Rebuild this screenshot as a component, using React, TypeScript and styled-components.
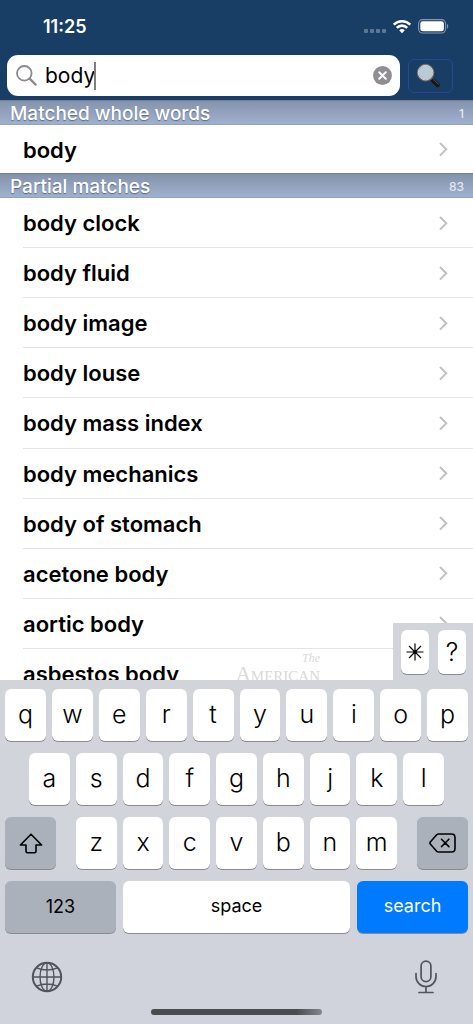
import React, { useState } from 'react';
import styled, { createGlobalStyle } from 'styled-components';

const GlobalStyle = createGlobalStyle`
  * { box-sizing: border-box; }
  body {
    margin: 0;
    background: #fff;
    font-family: Inter, "Liberation Sans", sans-serif;
    color: #000;
  }
  button, input { font: inherit; color: inherit; }
  button { padding: 0; border: 0; cursor: pointer; }
`;

const Screen = styled.div`
  display: flex;
  flex-direction: column;
  height: 100vh;
  overflow: hidden;
`;

const Header = styled.header`
  background: #183e66;
`;

const StatusBar = styled.div`
  display: flex;
  align-items: center;
  justify-content: space-between;
  height: 55px;
  padding: 0 24px 2px 43px;
  color: #fff;
`;

const Time = styled.time`
  font-size: 18px;
  line-height: 22px;
  font-weight: 600;
`;

const StatusIcons = styled.div`
  display: flex;
  align-items: center;
  gap: 6px;
`;

const SearchBar = styled.form`
  display: flex;
  align-items: center;
  gap: 8px;
  padding: 0 20px 4px 7px;
`;

const SearchField = styled.label`
  display: flex;
  align-items: center;
  flex: 1;
  height: 41px;
  padding: 0 8px 0 9px;
  border-radius: 11px;
  background: #fff;
  cursor: text;
`;

const SearchInput = styled.input`
  field-sizing: content;
  min-width: 1px;
  margin-left: 8px;
  padding: 0;
  border: 0;
  outline: 0;
  background: none;
  font-size: 21px;
  line-height: 28px;
  caret-color: transparent;
`;

const Caret = styled.span`
  width: 2px;
  height: 28px;
  margin-left: -1px;
  background: #808080;
`;

const ClearButton = styled.button`
  display: flex;
  margin-left: auto;
  background: none;
`;

const GoButton = styled.button`
  display: flex;
  align-items: center;
  width: 45px;
  height: 34px;
  padding-left: 7px;
  border: 1px solid #2e4496;
  border-radius: 6px;
  background: none;
`;

const Results = styled.main`
  position: relative;
  display: flex;
  flex: 1;
  flex-direction: column;
  min-height: 0;
  overflow: hidden;
`;

const SectionHeader = styled.h2`
  display: flex;
  flex: none;
  align-items: center;
  justify-content: space-between;
  height: 25px;
  margin: 0;
  padding: 3px 9px 0 10px;
  border-top: 1px solid #6f7f99;
  border-bottom: 1px solid #92a3c0;
  background: linear-gradient(#8593ac, #9fb0ce);
  color: #fff;
  font-size: 19px;
  line-height: 24px;
  font-weight: 500;
  text-shadow: 0 1px 1px #5c6a80;
`;

const Count = styled.span`
  color: #e3e8f2;
  font-size: 12px;
  font-weight: 500;
  text-shadow: none;
`;

const WholeList = styled.ul`
  flex: none;
  margin: 0;
  padding: 0;
  list-style: none;
`;

const PartialList = styled.ul`
  display: grid;
  flex: 1;
  grid-template-rows: repeat(9, 1fr) 31px;
  min-height: 0;
  margin: 0;
  padding: 0;
  list-style: none;
`;

const Row = styled.li`
  position: relative;
  display: flex;
  min-height: 0;
  padding-left: 23px;
`;

const RowLink = styled.a<{ $line: boolean }>`
  display: flex;
  flex: 1;
  align-items: center;
  justify-content: space-between;
  min-height: ${(p) => (p.$line ? 50 : 48)}px;
  padding: 1px 25px 0 0;
  border-bottom: ${(p) => (p.$line ? '1px solid #e4e4e6' : '0')};
  color: #000;
  font-size: 22px;
  line-height: 28px;
  font-weight: 600;
  text-decoration: none;
`;

const Watermark = styled.div`
  position: absolute;
  top: 2px;
  right: 153px;
  color: #d9d9d9;
  font-family: "Liberation Serif", serif;
  text-align: right;
`;

const WatermarkThe = styled.div`
  font-size: 12px;
  line-height: 14px;
  font-style: italic;
`;

const WatermarkName = styled.div`
  font-size: 21px;
  line-height: 18px;
  font-variant: small-caps;
`;

const Wildcards = styled.div`
  position: absolute;
  right: 0;
  bottom: 0;
  display: flex;
  gap: 9px;
  padding: 7px 7px 6px 8px;
  background: #d1d4da;
`;

const Keyboard = styled.section`
  flex: none;
  background: linear-gradient(#d1d4d9, #d0d3dc);
`;

const Keys = styled.div`
  display: flex;
  flex-direction: column;
  gap: 12px;
  padding: 9px 5px 0;
`;

const KeyRow = styled.div<{ $inset?: number; $gap?: number }>`
  display: flex;
  gap: ${(p) => p.$gap ?? 6}px;
  padding: 0 ${(p) => p.$inset ?? 0}px;
`;

const LetterGroup = styled.div`
  display: flex;
  flex: 1;
  gap: 6px;
`;

const tones = {
  light: ['#fff', '#000'],
  dark: ['#abb1bb', '#000'],
  blue: ['#007aff', '#fff'],
};

const Key = styled.button<{ $tone?: keyof typeof tones; $width?: number; $word?: boolean; $short?: boolean }>`
  display: flex;
  flex: ${(p) => (p.$width ? `0 0 ${p.$width}px` : '1 1 0')};
  align-items: center;
  justify-content: center;
  min-width: 0;
  height: ${(p) => (p.$short ? 44 : 52)}px;
  padding-bottom: ${(p) => (p.$short || p.$tone === 'dark' ? 0 : 3)}px;
  border-radius: 6px;
  background: ${(p) => tones[p.$tone ?? 'light'][0]};
  box-shadow: 0 1px 0 #898b8f;
  color: ${(p) => tones[p.$tone ?? 'light'][1]};
  font-size: ${(p) => (p.$word ? 18 : 25)}px;
  line-height: 32px;
  font-weight: ${(p) => (p.$word ? 400 : 350)};
`;

const BottomBar = styled.div`
  display: flex;
  align-items: center;
  justify-content: space-between;
  height: 76px;
  padding: 12px 35px 0 31px;
`;

const IconButton = styled.button`
  display: flex;
  background: none;
`;

const HomeIndicator = styled.div`
  width: 36%;
  height: 6px;
  margin: 0 auto 9px;
  border-radius: 3px;
  background: linear-gradient(90deg, #4b4c4e 85%, #85878c);
`;

const Signal = () => (
  <svg width="22" height="12" viewBox="0 0 22 12" fill="#5d7894">
    {[0, 6, 12, 18].map((x) => (
      <rect key={x} x={x} y="8" width="4" height="4" rx="1" />
    ))}
  </svg>
);

const Wifi = () => (
  <svg width="20" height="15" viewBox="0 0 20 15" fill="none" stroke="#fff" strokeWidth="2.6">
    <path d="M1.7 5.6a11.8 11.8 0 0 1 16.6 0" />
    <path d="M4.8 8.8a7.4 7.4 0 0 1 10.4 0" />
    <path d="M10 14.2 7.2 11.3a4 4 0 0 1 5.6 0z" fill="#fff" stroke="none" />
  </svg>
);

const Battery = () => (
  <svg width="31" height="15" viewBox="0 0 31 15">
    <rect x="0.6" y="0.6" width="27" height="13.4" rx="4" fill="none" stroke="#8197ae" strokeWidth="1.1" />
    <rect x="2.3" y="2.3" width="23.6" height="10" rx="2.4" fill="#fff" />
    <path d="M29 5c1.6.5 1.6 4.3 0 4.8z" fill="#8197ae" />
  </svg>
);

const SearchIcon = () => (
  <svg width="21" height="21" viewBox="0 0 21 21" fill="none" stroke="#8a8a8e" strokeWidth="1.8">
    <circle cx="8.3" cy="8.3" r="7.3" />
    <path d="m13.6 13.6 6 6" strokeWidth="2.3" strokeLinecap="round" />
  </svg>
);

const ClearIcon = () => (
  <svg width="19" height="19" viewBox="0 0 19 19">
    <circle cx="9.5" cy="9.5" r="9.4" fill="#8e8e93" />
    <path d="m6.2 6.2 6.6 6.6m0-6.6-6.6 6.6" stroke="#fff" strokeWidth="2" strokeLinecap="round" />
  </svg>
);

const Magnifier = () => (
  <svg width="26" height="26" viewBox="0 0 26 26">
    <path d="m15 15.2 3 3" stroke="#9a9a9a" strokeWidth="2.4" />
    <path d="m17.2 17.7 4.4 4.2" stroke="#17181b" strokeWidth="4.6" strokeLinecap="round" />
    <path d="m17.6 16.4 4.8 4.600" stroke="#55585d" strokeWidth="1" strokeLinecap="round" />
    <circle cx="9.6" cy="9.6" r="7.900" fill="#b9c9d6" stroke="#6f6e6d" strokeWidth="1.8" />
    <circle cx="9.6" cy="9.6" r="7.3" fill="none" stroke="#d5d3cf" strokeWidth="1" />
  </svg>
);

const Chevron = () => (
  <svg width="9" height="15" viewBox="0 0 9 15" fill="none" stroke="#c0c0c3" strokeWidth="2">
    <path d="m1 1 6.300 6.300-6.300 6.300" />
  </svg>
);

const Asterisk = () => (
  <svg width="18" height="18" viewBox="0 0 18 18" stroke="#000" strokeWidth="1.2">
    <path d="M9 .5v17M.5 9h17M3 3l12 12M15 3 3 15" />
    <circle cx="9" cy="9" r="1.6" stroke="none" />
  </svg>
);

const Shift = () => (
  <svg width="24" height="21" viewBox="0 0 24 21" fill="none" stroke="#000" strokeWidth="1.6" strokeLinejoin="round">
    <path d="M12 1.2 22.6 12H17v6.3q0 1.5-1.5 1.5h-7Q7 19.8 7 18.3V12H1.4z" />
  </svg>
);

const Backspace = () => (
  <svg width="27" height="20" viewBox="0 0 27 20" fill="none" stroke="#000" strokeWidth="1.6" strokeLinecap="round" strokeLinejoin="round">
    <path d="M9.6 1h12.9q3.5 0 3.5 3.5v11q0 3.5-3.5 3.5H9.6q-1.1 0-1.9-.8L1.3 11q-.8-1 0-2l6.4-7.2Q8.5 1 9.6 1z" />
    <path d="m12.5 6.2 7.4 7.4m0-7.4-7.4 7.4" />
  </svg>
);

const Globe = () => (
  <svg width="32" height="32" viewBox="0 0 32 32" fill="none" stroke="#50545c" strokeWidth="1.4">
    <circle cx="16" cy="16" r="14.2" strokeWidth="2" />
    <ellipse cx="16" cy="16" rx="7" ry="14.2" />
    <path d="M16 2v28M2 16h28M5.5 6.8q10.5 4.4 21 0M5.5 25.2q10.5-4.4 21 0" />
  </svg>
);

const Mic = () => (
  <svg width="24" height="34" viewBox="0 0 24 34" fill="none" stroke="#50545c" strokeWidth="1.7" strokeLinecap="round">
    <rect x="7.1" y="1.2" width="9.8" height="20.5" rx="4.9" />
    <path d="M2 13.5v3a10 10 0 0 0 20 0v-3M12 26.500v6M5 32.5h14" />
  </svg>
);

const partial = [
  'body clock', 'body fluid', 'body image', 'body louse', 'body mass index',
  'body mechanics', 'body of stomach', 'acetone body', 'aortic body', 'asbestos body',
];

export default function App() {
  const [query, setQuery] = useState('body');
  const type = (s: string) => setQuery((q) => q + s);
  const letters = (s: string) =>
    s.split('').map((c) => (
      <Key key={c} type="button" onClick={() => type(c)}>{c}</Key>
    ));

  return (
    <>
      <GlobalStyle />
      <Screen>
        <Header>
          <StatusBar>
            <Time>11:25</Time>
            <StatusIcons><Signal /><Wifi /><Battery /></StatusIcons>
          </StatusBar>
          <SearchBar onSubmit={(e) => e.preventDefault()}>
            <SearchField>
              <SearchIcon />
              <SearchInput aria-label="Search" value={query} onChange={(e) => setQuery(e.target.value)} />
              <Caret />
              <ClearButton type="button" aria-label="Clear" onClick={() => setQuery('')}><ClearIcon /></ClearButton>
            </SearchField>
            <GoButton type="submit" aria-label="Find"><Magnifier /></GoButton>
          </SearchBar>
        </Header>
        <Results>
          <SectionHeader>Matched whole words <Count>1</Count></SectionHeader>
          <WholeList>
            <Row><RowLink href="#body" $line={false}>body<Chevron /></RowLink></Row>
          </WholeList>
          <SectionHeader>Partial matches <Count>83</Count></SectionHeader>
          <PartialList>
            {partial.map((word, i) => (
              <Row key={word}>
                <RowLink href={`#${word.replace(/ /g, '-')}`} $line>{word}<Chevron /></RowLink>
                {i === partial.length - 1 && (
                  <Watermark>
                    <WatermarkThe>The</WatermarkThe>
                    <WatermarkName>American</WatermarkName>
                  </Watermark>
                )}
              </Row>
            ))}
          </PartialList>
          <Wildcards>
            <Key type="button" $short $width={28} aria-label="Asterisk" onClick={() => type('*')}><Asterisk /></Key>
            <Key type="button" $short $width={28} onClick={() => type('?')}>?</Key>
          </Wildcards>
        </Results>
        <Keyboard>
          <Keys>
            <KeyRow>{letters('qwertyuiop')}</KeyRow>
            <KeyRow $inset={24}>{letters('asdfghjkl')}</KeyRow>
            <KeyRow $gap={20}>
              <Key type="button" $tone="dark" $width={51} aria-label="Shift"><Shift /></Key>
              <LetterGroup>{letters('zxcvbnm')}</LetterGroup>
              <Key type="button" $tone="dark" $width={51} aria-label="Delete" onClick={() => setQuery((q) => q.slice(0, -1))}><Backspace /></Key>
            </KeyRow>
            <KeyRow $gap={7}>
              <Key type="button" $tone="dark" $width={111} $word>123</Key>
              <Key type="button" $word onClick={() => type(' ')}>space</Key>
              <Key type="button" $tone="blue" $width={111} $word>search</Key>
            </KeyRow>
          </Keys>
          <BottomBar>
            <IconButton type="button" aria-label="Next keyboard"><Globe /></IconButton>
            <IconButton type="button" aria-label="Dictate"><Mic /></IconButton>
          </BottomBar>
          <HomeIndicator />
        </Keyboard>
      </Screen>
    </>
  );
}
